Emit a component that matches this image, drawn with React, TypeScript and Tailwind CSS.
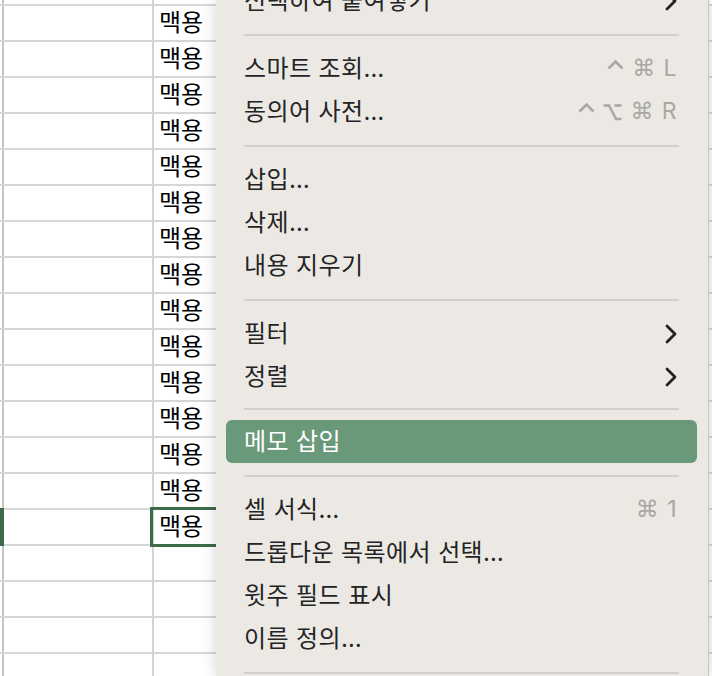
import React from "react";

type MenuItem =
  | { label: string; keys?: string[]; sub?: boolean; active?: boolean }
  | { sep: true; tight?: boolean };

const MENU: MenuItem[] = [
  { label: "선택하여 붙여넣기", sub: true },
  { sep: true },
  { label: "스마트 조회…", keys: ["ctrl", "cmd", "L"] },
  { label: "동의어 사전…", keys: ["ctrl", "opt", "cmd", "R"] },
  { sep: true },
  { label: "삽입…" },
  { label: "삭제…" },
  { label: "내용 지우기" },
  { sep: true },
  { label: "필터", sub: true },
  { label: "정렬", sub: true },
  { sep: true, tight: true },
  { label: "메모 삽입", active: true },
  { sep: true },
  { label: "셀 서식…", keys: ["cmd", "1"] },
  { label: "드롭다운 목록에서 선택…" },
  { label: "윗주 필드 표시" },
  { label: "이름 정의…" },
  { sep: true },
];

const ROWS = Array.from({ length: 19 }, (_, i) => (i < 15 ? "맥용" : ""));

function Chevron() {
  return (
    <svg width="12" height="20" viewBox="0 0 12 20" className="shrink-0">
      <polyline points="2,2 10,10 2,18" fill="none" stroke="#222" strokeWidth="2.8" strokeLinecap="round" strokeLinejoin="round" />
    </svg>
  );
}

function Key({ k }: { k: string }) {
  if (k === "ctrl")
    return (
      <svg width="17" height="20" viewBox="0 0 17 20">
        <polyline points="1.5,9.5 8.5,2.5 15.5,9.5" fill="none" stroke="currentColor" strokeWidth="2.6" />
      </svg>
    );
  if (k === "opt")
    return (
      <svg width="19" height="20" viewBox="0 0 19 20">
        <path d="M0.5 3.5 H6 L13 17 H18.5 M11.5 3.5 H18.5" fill="none" stroke="currentColor" strokeWidth="2.4" />
      </svg>
    );
  if (k === "cmd")
    return <span className="font-['DejaVu_Sans',sans-serif] text-[23px] leading-none">⌘</span>;
  return <span className="font-['Inter',sans-serif] text-[23px] leading-none">{k}</span>;
}

function Keys({ keys }: { keys: string[] }) {
  return (
    <div className="flex items-center gap-[8px] text-[#aaa7a2]">
      {keys.map((k, i) => (
        <Key key={i} k={k} />
      ))}
    </div>
  );
}

function SheetRow({ text, first }: { text: string; first?: boolean }) {
  return (
    <div className={`flex shrink-0 ${first ? "h-[4px]" : "h-[36px] border-t-2 border-[#d6d6d6]"}`}>
      <div className="w-[4px] shrink-0 border-r-2 border-[#c4c4c4]" />
      <div className="w-[150px] shrink-0 border-r-2 border-[#d3d3d3]" />
      <div className="flex-1 flex items-center pl-[5px] text-[24px] leading-none text-black">{text}</div>
    </div>
  );
}

export default function App() {
  return (
    <div className="relative w-[712px] h-[676px] overflow-hidden bg-white font-['Inter','Noto_Sans_CJK_KR',sans-serif]">
      {/* sheet */}
      <div className="flex flex-col">
        <SheetRow text="" first />
        {ROWS.map((t, i) => (
          <SheetRow key={i} text={t} />
        ))}
      </div>

      {/* selection */}
      <div className="absolute left-0 top-[508px] w-[4px] h-[38px] bg-[#3d6b4a]" />
      <div className="absolute left-[150px] top-[507px] w-[120px] h-[40px] border-[3px] border-[#3d6b4a]" />

      {/* context menu */}
      <div className="absolute left-[216px] top-0 w-[493px] h-[676px] bg-[#ece9e4] border-r border-[#c9c6c1] shadow-[0_0_14px_rgba(0,0,0,0.18)] overflow-hidden">
        <div className="flex flex-col -mt-[21px] pl-[10px] pr-[11px]">
          {MENU.map((item, i) =>
            "sep" in item ? (
              <div key={i} className={`${item.tight ? "h-[22px]" : "h-[25px]"} flex items-center px-[18px]`}>
                <div className="h-[2px] w-full bg-[#d3cfca]" />
              </div>
            ) : (
              <div
                key={i}
                className={`h-[43px] flex items-center justify-between pl-[18px] pr-[20px] rounded-[6px] text-[24px] leading-none tracking-[0.4px] ${
                  item.active ? "bg-[#6a997a] text-white" : "text-[#242424]"
                }`}
              >
                <span>{item.label}</span>
                {item.keys && <Keys keys={item.keys} />}
                {item.sub && <Chevron />}
              </div>
            )
          )}
        </div>
      </div>
    </div>
  );
}
